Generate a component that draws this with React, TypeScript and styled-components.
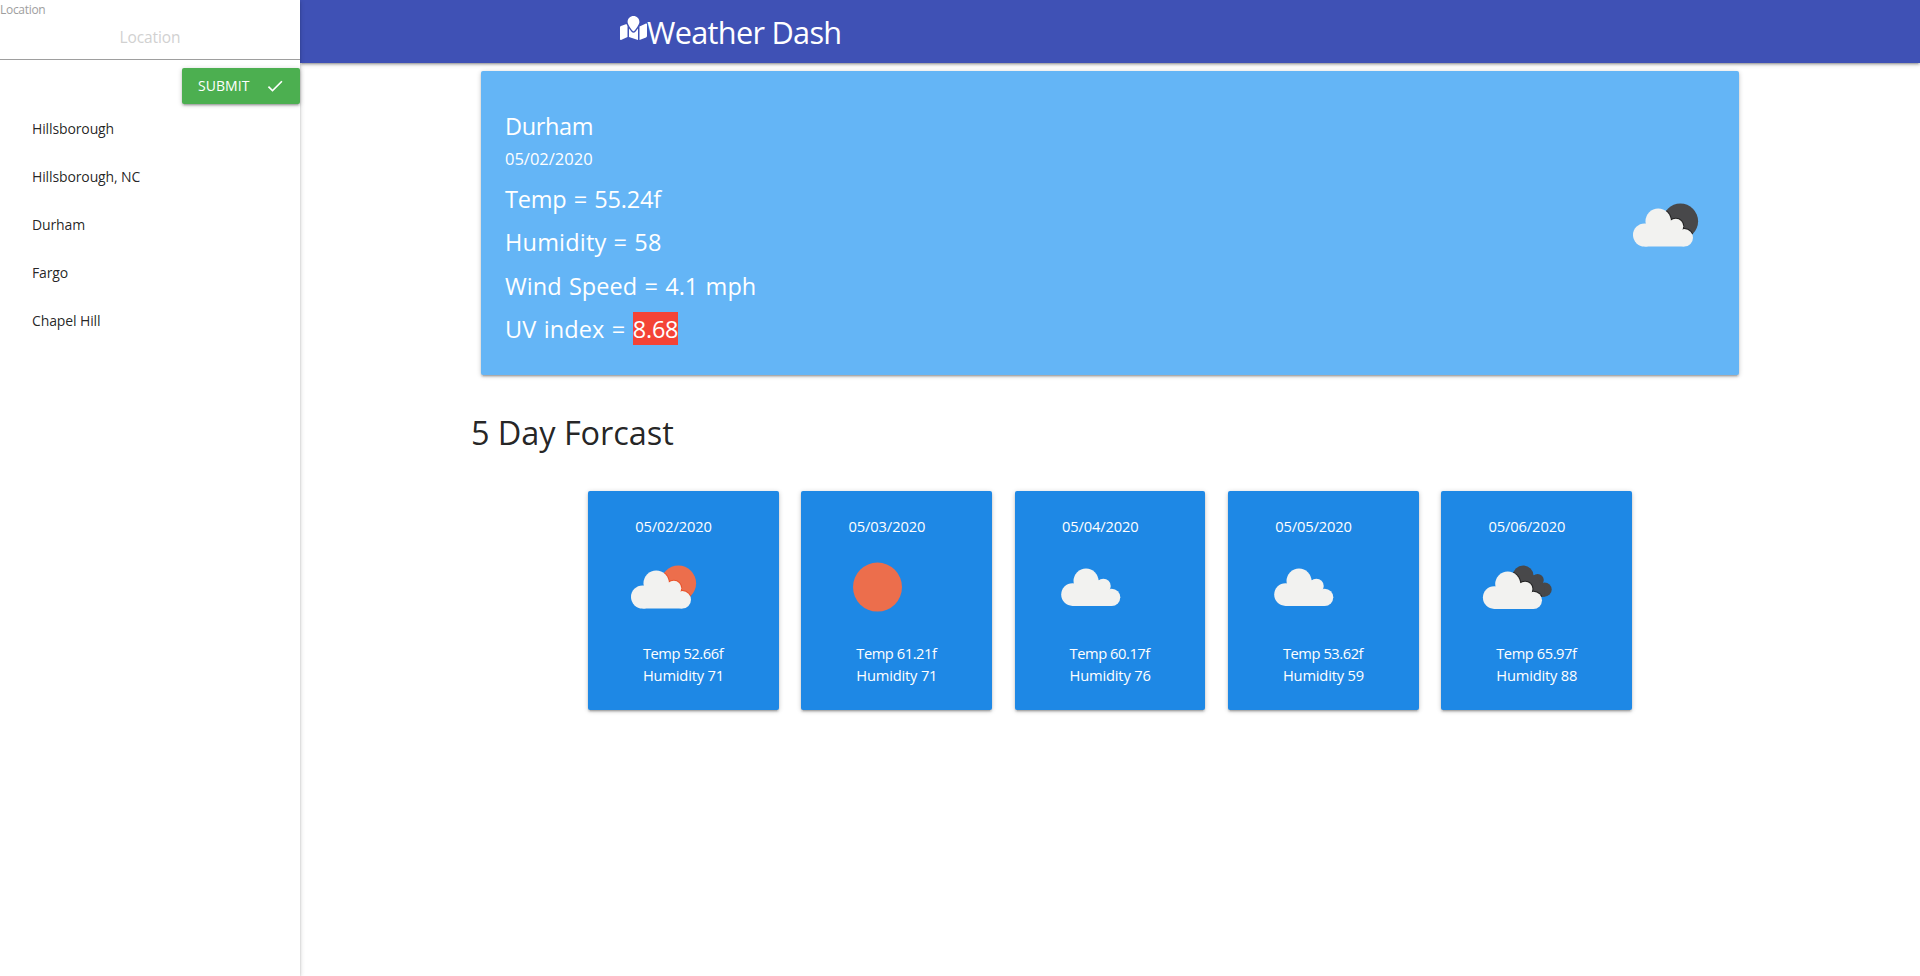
import React from 'react';
import styled, { createGlobalStyle } from 'styled-components';
import { FaMapMarked } from 'react-icons/fa';
import { MdCheck } from 'react-icons/md';

const depth =
  '0 2px 2px 0 rgba(0,0,0,0.14), 0 3px 1px -2px rgba(0,0,0,0.12), 0 1px 5px 0 rgba(0,0,0,0.2)';

const GlobalStyle = createGlobalStyle`
  *, *::before, *::after { box-sizing: border-box; }
  body {
    margin: 0;
    background: #fff;
    color: rgba(0, 0, 0, 0.87);
    font-family: "Open Sans", "Noto Sans", sans-serif;
  }
  h1, h2, p { margin: 0; font-weight: 400; }
`;

const Page = styled.div`
  display: flex;
  height: 976px;
  overflow: hidden;
`;

const Sidebar = styled.aside`
  position: relative;
  z-index: 2;
  flex: 0 0 300px;
  display: flex;
  flex-direction: column;
  background: #fff;
  box-shadow: ${depth};
`;

const FieldLabel = styled.label`
  height: 18px;
  padding-top: 1px;
  font-size: 12px;
  line-height: 18px;
  letter-spacing: -0.3px;
  color: #9e9e9e;
`;

const Field = styled.input`
  height: 42px;
  width: 100%;
  padding: 0 0 3px;
  border: 0;
  border-bottom: 1px solid #9e9e9e;
  border-radius: 0;
  outline: none;
  background: transparent;
  font: 400 15.5px "Open Sans", sans-serif;
  letter-spacing: -0.1px;
  text-align: center;
  &::placeholder { color: #d1d1d1; opacity: 1; }
`;

const SubmitButton = styled.button`
  align-self: flex-end;
  display: flex;
  align-items: center;
  justify-content: space-between;
  width: 118px;
  height: 36px;
  margin: 8px 0 1px;
  padding: 0 15px 0 16px;
  border: 0;
  border-radius: 2px;
  background: #4caf50;
  color: #fff;
  font: 500 14px/36px "Open Sans", sans-serif;
  letter-spacing: 0.05px;
  box-shadow: ${depth};
`;

const HistoryList = styled.ul`
  margin: 0;
  padding: 0;
  list-style: none;
`;

const HistoryItem = styled.li`
  height: 48px;
  padding-left: 32px;
  font-size: 14px;
  line-height: 48px;
  letter-spacing: -0.12px;
`;

const Content = styled.div`
  flex: 1;
  display: flex;
  flex-direction: column;
`;

const NavBar = styled.nav`
  display: flex;
  height: 63px;
  padding-left: 320px;
  background: #3f51b5;
  color: #fff;
  box-shadow: ${depth};
  svg { margin-top: 16px; width: 27px; height: 24px; }
`;

const Brand = styled.h1`
  font-size: 30.7px;
  line-height: 65px;
  letter-spacing: -0.7px;
`;

const Container = styled.main`
  width: 1280px;
  margin: 0 auto;
`;

const CurrentCard = styled.section`
  display: flex;
  justify-content: space-between;
  height: 304px;
  margin: 8px 11px 0;
  padding: 39px 24px 0;
  border-radius: 2px;
  background: #64b5f6;
  color: #fff;
  box-shadow: ${depth};
`;

const CityName = styled.h2`
  font-size: 23.5px;
  line-height: 33px;
  letter-spacing: -0.35px;
`;

const CurrentDate = styled.p`
  height: 35px;
  font-size: 16.5px;
  line-height: 31px;
`;

const Reading = styled.p<{ $tracking?: number; $wordGap?: number }>`
  height: 43.33px;
  font-size: 23.5px;
  line-height: 43.33px;
  letter-spacing: ${({ $tracking = 0 }) => $tracking}px;
  word-spacing: ${({ $wordGap = 0 }) => $wordGap}px;
`;

const UvBadge = styled.span`
  display: inline-block;
  padding-top: 2px;
  background: #f44336;
  line-height: 31px;
  letter-spacing: -0.25px;
`;

const CurrentIcon = styled.div`
  height: 100px;
  margin: 65px -1px 0 0;
`;

const ForecastHeading = styled.h2`
  margin: 40px 0;
  padding-left: 1px;
  font-size: 32.5px;
  line-height: 36px;
  letter-spacing: -0.08px;
`;

const ForecastRow = styled.section`
  display: grid;
  grid-template-columns: repeat(5, 190.83px);
  justify-content: center;
  column-gap: 22.5px;
`;

const DayCard = styled.article`
  display: flex;
  flex-direction: column;
  height: 219px;
  padding: 24px 24px 0 26px;
  border-radius: 2px;
  background: #1e88e5;
  color: #fff;
  font-size: 14.7px;
  box-shadow: ${depth};
`;

const DayDate = styled.p`
  height: 22.4px;
  padding-left: 21.3px;
  line-height: 22px;
  letter-spacing: -0.13px;
`;

const DayStats = styled.div`
  padding: 4.6px 0 0 29px;
  line-height: 22px;
`;

const DayTemp = styled.p`
  letter-spacing: -0.45px;
`;

const DayHumidity = styled.p`
  letter-spacing: -0.18px;
`;

type Sky = 'fewDay' | 'fewNight' | 'clear' | 'scattered' | 'broken';

const Puffs = () => (
  <>
    <circle cx="11.5" cy="26.5" r="11.5" />
    <circle cx="25.2" cy="12.7" r="12.7" />
    <circle cx="42.8" cy="17.8" r="7.5" />
    <circle cx="51.3" cy="29.3" r="8.7" />
    <path d="M11.5 38V20L20 12H42L46 22L51.3 26V38Z" />
  </>
);

const WeatherIcon = ({ sky, id }: { sky: Sky; id: string }) => {
  const night = sky === 'fewNight' || sky === 'broken';
  const few = sky === 'fewDay' || sky === 'fewNight';
  const back = sky === 'broken' ? (
    <g transform="translate(35.5 28.5) scale(0.82)"><Puffs /></g>
  ) : (
    <circle cx="64.4" cy="46.2" r="17.7" />
  );
  const front = few
    ? 'translate(17 33.5)'
    : sky === 'broken'
      ? 'translate(15.9 34.5) scale(0.985)'
      : 'translate(20.2 31.5) scale(0.985)';
  return (
    <svg width="100" height="100" viewBox="0 0 100 100" aria-hidden="true">
      {sky === 'clear' && <circle cx="50.5" cy="50.1" r="24.5" fill="#ec6e4c" />}
      {(few || sky === 'broken') && (
        <>
          <clipPath id={id}>
            {sky === 'broken' ? (
              <>
                <circle cx="56.2" cy="38.9" r="10.4" />
                <circle cx="70.6" cy="43.1" r="6.2" />
                <circle cx="77.6" cy="52.5" r="7.1" />
                <path d="M40 60V45L51 38H69L73 46L77 50V60Z" />
              </>
            ) : (
              <circle cx="64.4" cy="46.2" r="17.7" />
            )}
          </clipPath>
          <g fill={night ? '#48484a' : '#ec6e4c'}>{back}</g>
          <g clipPath={`url(#${id})`}>
            <g
              transform={front}
              fill={night ? '#222223' : '#e9532b'}
              stroke={night ? '#222223' : '#e9532b'}
              strokeWidth="2"
            >
              <Puffs />
            </g>
          </g>
        </>
      )}
      {sky !== 'clear' && (
        <g transform={front} fill="#f2f2f0"><Puffs /></g>
      )}
    </svg>
  );
};

const history = ['Hillsborough', 'Hillsborough, NC', 'Durham', 'Fargo', 'Chapel Hill'];

const forecast: { date: string; sky: Sky; temp: string; humidity: number }[] = [
  { date: '05/02/2020', sky: 'fewDay', temp: '52.66', humidity: 71 },
  { date: '05/03/2020', sky: 'clear', temp: '61.21', humidity: 71 },
  { date: '05/04/2020', sky: 'scattered', temp: '60.17', humidity: 76 },
  { date: '05/05/2020', sky: 'scattered', temp: '53.62', humidity: 59 },
  { date: '05/06/2020', sky: 'broken', temp: '65.97', humidity: 88 },
];

export default function App() {
  return (
    <Page>
      <GlobalStyle />
      <Sidebar>
        <FieldLabel htmlFor="location">Location</FieldLabel>
        <Field id="location" placeholder="Location" />
        <SubmitButton type="button">
          SUBMIT
          <MdCheck size={20} />
        </SubmitButton>
        <HistoryList>
          {history.map((city) => (
            <HistoryItem key={city}>{city}</HistoryItem>
          ))}
        </HistoryList>
      </Sidebar>
      <Content>
        <NavBar>
          <FaMapMarked />
          <Brand>Weather Dash</Brand>
        </NavBar>
        <Container>
          <CurrentCard>
            <div>
              <CityName>Durham</CityName>
              <CurrentDate>05/02/2020</CurrentDate>
              <Reading $tracking={-0.2} $wordGap={1.4}>Temp = 55.24f</Reading>
              <Reading $tracking={0.2} $wordGap={0.8}>Humidity = 58</Reading>
              <Reading $tracking={0.05} $wordGap={1.1}>Wind Speed = 4.1 mph</Reading>
              <Reading $tracking={0.1} $wordGap={1.2}>
                UV index = <UvBadge>8.68</UvBadge>
              </Reading>
            </div>
            <CurrentIcon>
              <WeatherIcon sky="fewNight" id="current" />
            </CurrentIcon>
          </CurrentCard>
          <ForecastHeading>5 Day Forcast</ForecastHeading>
          <ForecastRow>
            {forecast.map((day) => (
              <DayCard key={day.date}>
                <DayDate>{day.date}</DayDate>
                <WeatherIcon sky={day.sky} id={`sky-${day.date.slice(3, 5)}`} />
                <DayStats>
                  <DayTemp>Temp {day.temp}f</DayTemp>
                  <DayHumidity>Humidity {day.humidity}</DayHumidity>
                </DayStats>
              </DayCard>
            ))}
          </ForecastRow>
        </Container>
      </Content>
    </Page>
  );
}
